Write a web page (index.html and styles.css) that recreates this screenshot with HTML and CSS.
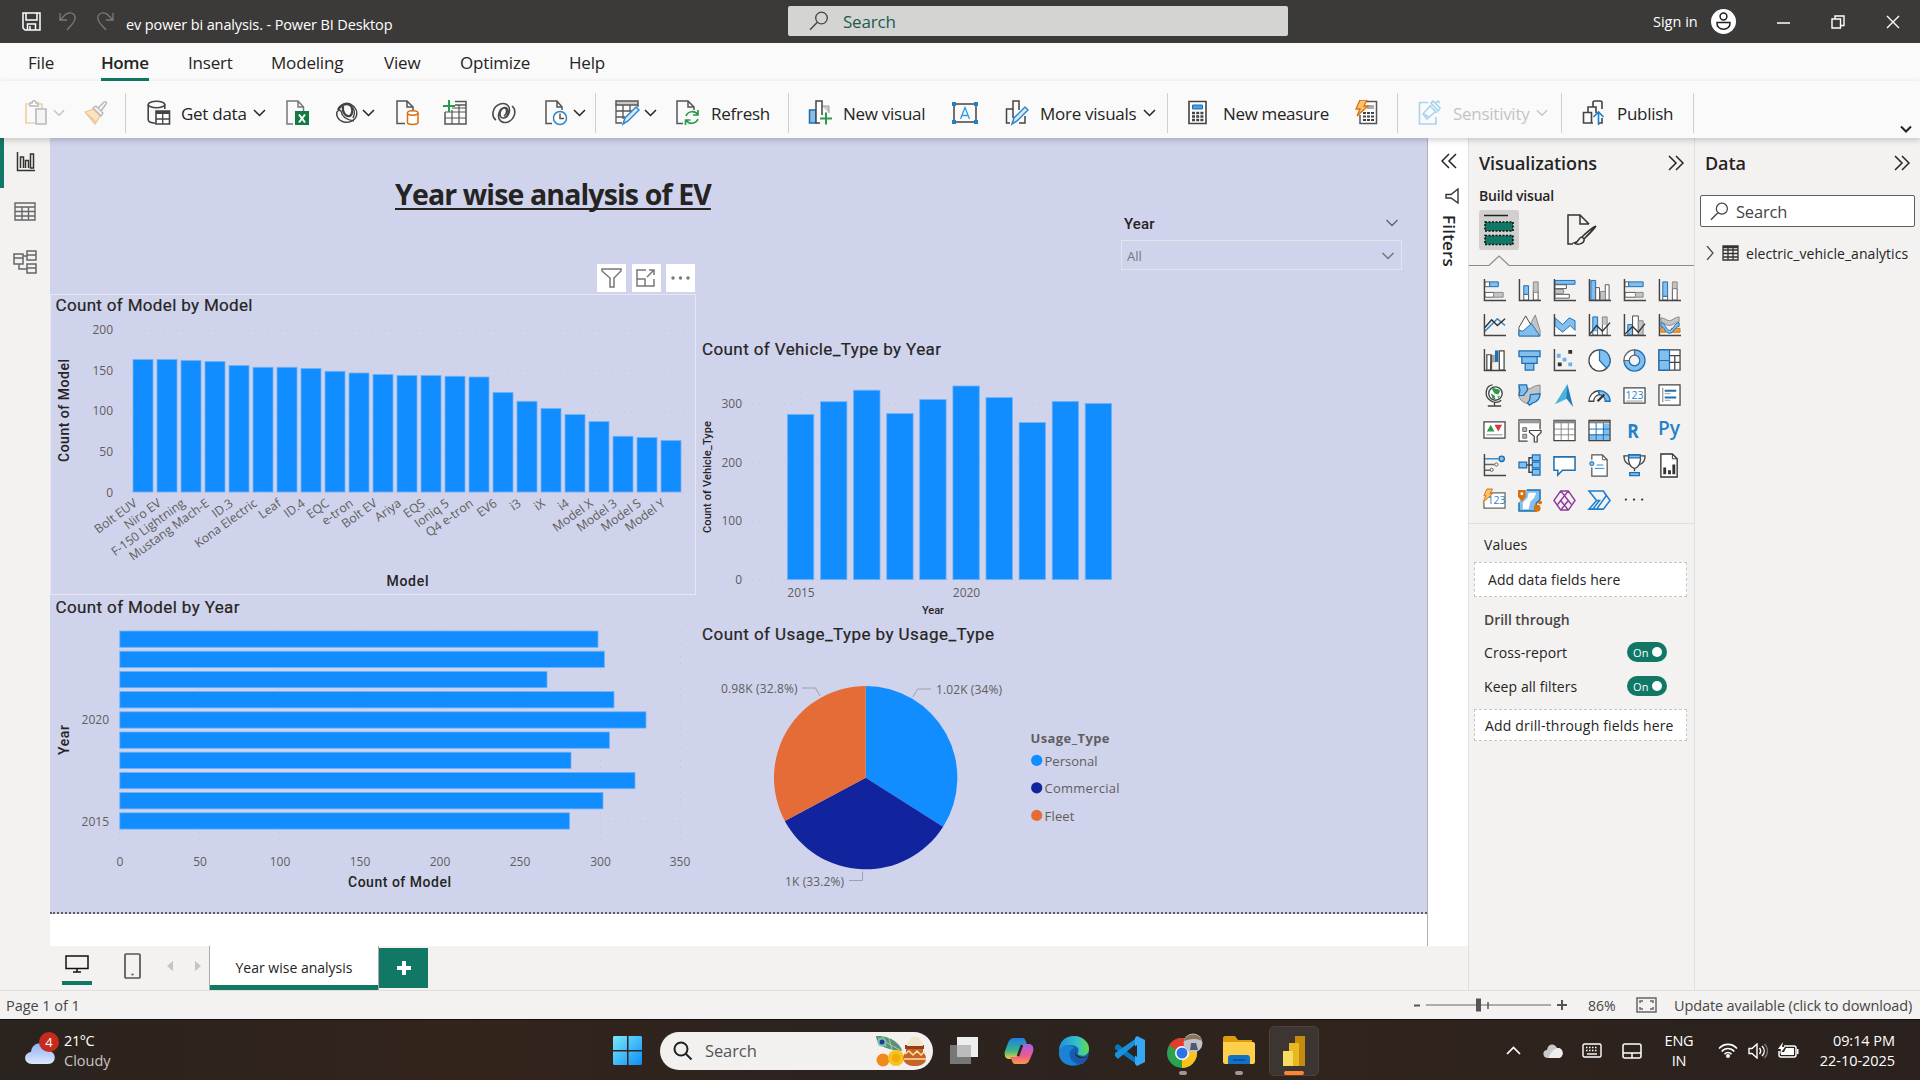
FILE: index.html
```html
<!DOCTYPE html>
<html lang="en">
<head>
<meta charset="utf-8">
<title>ev power bi analysis. - Power BI Desktop</title>
<link rel="stylesheet" href="styles.css">
</head>
<body>
<svg class="defs" width="0" height="0">
  <defs>
    <symbol id="chev" viewBox="0 0 13 8"><path d="M1 1l5.500 5.500L12 1" fill="none" stroke="currentColor" stroke-width="1.500"/></symbol>
    <symbol id="axis" viewBox="0 0 24 24"><path d="M1.500 0v22.500H24" fill="none" stroke="#444" stroke-width="1.500"/></symbol>
    <symbol id="lens" viewBox="0 0 20 20"><circle cx="12.500" cy="7" r="5.800" fill="none" stroke="currentColor" stroke-width="1.300"/><path d="M8.300 11.300L1 18.700" stroke="currentColor" stroke-width="1.400"/></symbol>
    <symbol id="dbl" viewBox="0 0 16 16"><path d="M1 1l7 7-7 7M8 1l7 7-7 7" fill="none" stroke="currentColor" stroke-width="1.500"/></symbol>
  </defs>
</svg>
<div class="app">
  <header class="titlebar">
    <svg width="20" height="20" viewBox="0 0 20 20" fill="none" stroke="#fff" stroke-width="1.500"><path d="M1 1h17v17H3l-2-2zM4 1v7h11V1M5.500 18v-6h8v6M8 14v4"/></svg>
    <svg width="18" height="20" viewBox="0 0 18 20" fill="none" stroke="#7d7b79" stroke-width="1.300"><path d="M1 1v7h7M1 8L6 3C10-1 17 1 16 7c-.400 4-5 7-8 11"/></svg>
    <svg width="18" height="20" viewBox="0 0 18 20" fill="none" stroke="#7d7b79" stroke-width="1.300"><path d="M17 1v7h-7M17 8l-5-5C8-1 1 1 2 7c.400 4 5 7 8 11"/></svg>
    <span class="wintitle">ev power bi analysis. - Power BI Desktop</span>
    <div class="topsearch"><svg width="20" height="20"><use href="#lens"/></svg><span>Search</span></div>
    <span class="signin">Sign in</span>
    <svg width="25" height="25" viewBox="0 0 25 25"><circle cx="12.500" cy="12.500" r="12.500" fill="#fff"/><circle cx="12.500" cy="7.500" r="3.400" fill="none" stroke="#222" stroke-width="1.500"/><path d="M6 13.500h13c1 9-14 9-13 0z" fill="none" stroke="#222" stroke-width="1.500"/></svg>
    <svg width="14" height="14" viewBox="0 0 14 14"><path d="M0 8h13" stroke="#fff" stroke-width="1.500"/></svg>
    <svg width="14" height="14" viewBox="0 0 14 14" fill="none" stroke="#fff" stroke-width="1.400"><path d="M1 4h8.500v9H1zM4 4V1h9v9.500H9.500"/></svg>
    <svg width="14" height="14" viewBox="0 0 14 14"><path d="M1 1l12 12M13 1L1 13" stroke="#fff" stroke-width="1.400"/></svg>
  </header>

  <nav class="menu">
    <span>File</span><span class="on">Home</span><span>Insert</span><span>Modeling</span><span>View</span><span>Optimize</span><span>Help</span>
  </nav>

  <div class="ribbon">
    <div class="cmd off"><svg width="24" height="26" viewBox="0 0 24 26" fill="none" stroke="#f1cfa3" stroke-width="1.600"><path d="M4 4H1v19h9M14 4h3v4"/><path d="M5 6V3h2c0-3 4-3 4 0h2v3z" fill="#fff" stroke="#b9b9b9"/><path d="M11 9h10v15H11z" fill="#f4f4f4" stroke="#b9b9b9"/></svg><svg class="ch" width="12" height="8"><use href="#chev"/></svg></div>
    <div class="cmd"><svg width="24" height="24" viewBox="0 0 24 24" stroke-width="1.300"><path d="M1 11l9-3 6 7-5 8z" fill="#fbe3c4" stroke="#efc592"/><path d="M3 13l9 8" fill="none" stroke="#efc592"/><path d="M9 7l3-2 7 7-2 3zM14 7l6-6c2-1 3 1 2 2l-5 7" fill="#f4f4f4" stroke="#b5b5b5"/></svg></div>
    <i class="sep"></i>
    <div class="cmd data-cmd"><svg width="24" height="26" viewBox="0 0 24 26" fill="none" stroke="#444" stroke-width="1.600"><ellipse cx="9.500" cy="4.500" rx="8.300" ry="3.300"/><path d="M1.200 4.500v15c0 2 3 3.500 7 3.700M17.800 4.500V9"/><path d="M9 11h13.500v13H9z" fill="#fff"/><path d="M9 12.500h13.500" stroke-width="3"/><path d="M9 19h13M15.700 13v11" stroke-width="1.300"/></svg><span>Get data</span><svg class="ch" width="13" height="8"><use href="#chev"/></svg></div>
    <div class="cmd"><svg width="24" height="26" viewBox="0 0 24 26"><path d="M7 24H1V1h11l5.500 6v4M12 1v6h6" fill="none" stroke="#777" stroke-width="1.500"/><path d="M9 11h14v14H9z" fill="#107c41"/><path d="M13 14.500l6 8M19 14.500l-6 8" stroke="#fff" stroke-width="2"/></svg></div>
    <div class="cmd"><svg width="22" height="22" viewBox="0 0 22 22" fill="none" stroke="#444" stroke-width="1.500"><path d="M3 7C5 2 10 0 14 2c6 3 8 8 6 13-2 4-7 6-12 5C2 19 0 13 1 10c1-2 3-2 4-1 1 6 5 9 13 10"/><path d="M2 8c2-5 8-7 12-5 3 2 3 9 0 11-4 1-8-3-7-10" stroke-width="2.200"/><path d="M14 3c4 3 6 8 3 13" /></svg><svg class="ch" width="13" height="8"><use href="#chev"/></svg></div>
    <div class="cmd"><svg width="24" height="26" viewBox="0 0 24 26" fill="none" stroke="#555" stroke-width="1.500"><path d="M9 23.500H1V1h10l6 6v3M11 1v6h6"/><g stroke="#d6700f" fill="#fff"><path d="M11.500 13v9.500c0 2.500 10.500 2.500 10.500 0V13"/><ellipse cx="16.700" cy="13" rx="5.200" ry="2.200"/></g></svg></div>
    <div class="cmd"><svg width="24" height="26" viewBox="0 0 24 26" fill="none" stroke="#555" stroke-width="1.500"><path d="M12 1.500h11V24H2V12M12 5h11" /><path d="M2 12h21M2 18h21M9 10v14M16 5v19M9 8h14" stroke-width="1.200"/><path d="M0 6h12M6 0v12" stroke="#2d9a4b" stroke-width="2"/></svg></div>
    <div class="cmd"><svg width="24" height="22" viewBox="0 0 24 22" fill="none" stroke="#4a4a4a" stroke-width="1.600"><path d="M4 18C-1 15 0 5 8 2c7-2 11 3 9 9-2 6-9 7-9 1 0-3 2-6 4-6 4 0 3 6 0 8M20 4c5 4 3 13-4 16-6 2-11-2-9-9 2-6 9-8 9-1 0 4-3 6-5 6"/></svg></div>
    <div class="cmd"><svg width="24" height="26" viewBox="0 0 24 26" fill="none" stroke="#555" stroke-width="1.500"><path d="M7 23.500H1V1h11l5 6v3M12 1v6h5"/><circle cx="15" cy="18" r="6.500" stroke="#2f86c8" fill="#fff"/><path d="M15 13.500V18.500h4"/></svg><svg class="ch" width="13" height="8"><use href="#chev"/></svg></div>
    <i class="sep"></i>
    <div class="cmd"><svg width="25" height="26" viewBox="0 0 25 26" fill="none" stroke="#555" stroke-width="1.500"><path d="M1 1h22v4H1z" fill="#c9c9c9"/><path d="M1 5v18h6M1 11h16M1 17h9M8 5v14M15 5v7M23 5v2" stroke-width="1.300"/><path d="M8 24l2-6L21 7l3 3-11 11z" fill="#d5ebfa" stroke="#2f86c8"/></svg><svg class="ch" width="13" height="8"><use href="#chev"/></svg></div>
    <div class="cmd shift"><svg width="24" height="26" viewBox="0 0 24 26" fill="none" stroke="#555" stroke-width="1.500"><path d="M7 23.500H1V1h11l6 6v3M12 1v6h6"/><g stroke="#2d9a4b" stroke-width="1.700"><path d="M10 16c2-5 9-6 12-1M22 10v5h-5M22 19c-2 5-9 6-12 1M9.500 25v-5h5"/></g></svg><span>Refresh</span></div>
    <i class="sep"></i>
    <div class="cmd shift"><svg width="24" height="26" viewBox="0 0 24 26"><path d="M14 6h7v7" fill="#ccc" stroke="#999"/><path d="M1.500 10H8v13H1.500z" fill="#83beec" stroke="#1a6fb5" stroke-width="1.500"/><path d="M12 23H8V1h6v14" fill="#fff" stroke="#444" stroke-width="1.500"/><path d="M12 18.500h12M18 12.500v12" stroke="#2d9a4b" stroke-width="2"/></svg><span>New visual</span></div>
    <div class="cmd"><svg width="26" height="22" viewBox="0 0 26 22"><path d="M2 2h22v18H2z" fill="none" stroke="#444" stroke-width="1.500"/><path d="M0 0h4v4H0zM22 0h4v4h-4zM0 18h4v4H0zM22 18h4v4h-4z" fill="#2080c5"/><path d="M8.500 17L13 5.500 17.500 17M10 13.500h6" fill="none" stroke="#2f9be0" stroke-width="1.300"/></svg></div>
    <div class="cmd shift"><svg width="24" height="26" viewBox="0 0 24 26" fill="none" stroke="#444" stroke-width="1.500"><path d="M5 23H1.500V9H8M8 18V1h6v9M20 16v7h-6"/><path d="M7 24l2-6L20 7l3 3-11 11z" fill="#d5ebfa" stroke="#2f86c8"/></svg><span>More visuals</span><svg class="ch" width="13" height="8"><use href="#chev"/></svg></div>
    <i class="sep"></i>
    <div class="cmd"><svg width="20" height="26" viewBox="0 0 20 26"><path d="M1 1.500h17v22H1z" fill="#fff" stroke="#444" stroke-width="1.600"/><path d="M4.500 5h10v4h-10z" fill="#4ba0e0" stroke="#1a6fb5"/><path d="M4 13h11.500M4 16.500h11.500M4 20h11.500" stroke="#444" stroke-width="2.400" stroke-dasharray="3 1.200"/></svg><span class="wide">New measure</span></div>
    <div class="cmd"><svg width="24" height="26" viewBox="0 0 24 26"><path d="M11 1.500h10.500v22H5V15" fill="#fff" stroke="#555" stroke-width="1.500"/><path d="M12 5h7v4h-7z" fill="#aaa"/><path d="M8 13h11M8 16.500h11M8 20h11" stroke="#444" stroke-width="2.200" stroke-dasharray="3 1"/><path d="M5 0h7L9 6h4L2 16l3-7H1z" fill="#fbc36b" stroke="#d6700f" stroke-width="1.300"/></svg></div>
    <i class="sep"></i>
    <div class="cmd off"><svg width="24" height="26" viewBox="0 0 24 26" fill="none" stroke="#a9d4ee" stroke-width="1.600"><path d="M10 2.500H1.500V24H18v-7"/><path d="M12 6l7 7M13 5l-8 9 4 5 9-8M5 14l6 3M13 3l2-2 7 7-2 3zM18 3l2-2 2 2"/></svg><span>Sensitivity</span><svg class="ch" width="12" height="8"><use href="#chev"/></svg></div>
    <i class="sep"></i>
    <div class="cmd shift"><svg width="24" height="26" viewBox="0 0 24 26" fill="none" stroke="#444" stroke-width="1.600"><path d="M11 23H1.500V12.500h8V23M6 12V7h8v6M11 7V2.500c0-1 1-1.500 2-1.500h5c1 0 2 .500 2 1.500V9M20 18v5h-3"/><path d="M16.500 25V12M11.500 17l5-5 5 5" stroke="#1a7fca"/></svg><span>Publish</span></div>
    <i class="sep"></i>
    <svg class="collapse" width="12" height="8" viewBox="0 0 12 8"><path d="M1 1.500l5 5 5-5" fill="none" stroke="#222" stroke-width="2"/></svg>
  </div>

  <main class="work">
    <aside class="rail">
      <div class="on"><svg width="20" height="20" viewBox="0 0 20 20" fill="none" stroke="#333" stroke-width="1.500"><path d="M1.500 0v18.500H19M4.500 16V5h3v11M9.500 16V8.500h3V16M14.500 16V2h3v14z"/></svg></div>
      <div><svg width="22" height="20" viewBox="0 0 22 20" fill="none" stroke="#666" stroke-width="1.400"><path d="M1 1h20v17H1zM1 5h20M1 9.500h20M1 14h20M8 5v13M14.500 5v13"/></svg></div>
      <div><svg width="24" height="24" viewBox="0 0 24 24" fill="none" stroke="#666" stroke-width="1.500"><path d="M1 4h9v10H1zM1 8h9M14 1h9v9h-9zM14 5h9M14 14h9v9h-9zM14 18h9M10 6h4M6 14v5h8"/></svg></div>
    </aside>

    <section class="center">
      <div class="stage">
        <div class="report">
          <h1 class="heading">Year wise analysis of EV</h1>

          <div class="slicer">
            <div class="slhead"><b>Year</b><svg width="14" height="8"><use href="#chev"/></svg></div>
            <div class="slbox"><span>All</span><svg width="14" height="8"><use href="#chev"/></svg></div>
          </div>

          <div class="vizbtns">
            <span><svg width="22" height="20" viewBox="0 0 22 20" fill="none" stroke="#777" stroke-width="1.500"><path d="M1 1h19v2l-7 7v9H9v-9L1 3z"/></svg></span>
            <span><svg width="20" height="18" viewBox="0 0 20 18" fill="none" stroke="#777" stroke-width="1.500"><path d="M10 1H1v16h17V10M1 10h8v7M11 8l7-7M13 1h5v5"/></svg></span>
            <span><svg width="20" height="4" viewBox="0 0 20 4" fill="#777"><circle cx="2" cy="2" r="1.700"/><circle cx="9.500" cy="2" r="1.700"/><circle cx="17" cy="2" r="1.700"/></svg></span>
          </div>

          <svg class="visual v1" viewBox="50 294 647 301">
            <rect x="50.500" y="294.500" width="645" height="300" fill="none" stroke="#e6e6ee"/>
            <text class="vt" x="55.500" y="311" textLength="197">Count of Model by Model</text>
            <path class="grid" d="M124 330.500H687M124 371H687M124 411.500H687M124 452H687M124 492.500H687"/>
            <g class="ax end"><text x="113" y="334">200</text><text x="113" y="375">150</text><text x="113" y="415">100</text><text x="113" y="456">50</text><text x="113" y="497">0</text></g>
            <g class="bars">
              <rect x="133" y="359.500" width="20" height="132.500"/><rect x="157" y="359.500" width="20" height="132.500"/><rect x="181" y="360.500" width="20" height="131.500"/><rect x="205" y="361.500" width="20" height="130.500"/><rect x="229" y="365.500" width="20" height="126.500"/><rect x="253" y="367.300" width="20" height="124.700"/><rect x="277" y="367.300" width="20" height="124.700"/><rect x="301" y="368.500" width="20" height="123.500"/><rect x="325" y="371.300" width="20" height="120.700"/><rect x="349" y="373" width="20" height="119"/><rect x="373" y="374.500" width="20" height="117.500"/><rect x="397" y="375.500" width="20" height="116.500"/><rect x="421" y="375.500" width="20" height="116.500"/><rect x="445" y="376.300" width="20" height="115.700"/><rect x="469" y="377" width="20" height="115"/><rect x="493" y="392.500" width="20" height="99.500"/><rect x="517" y="401.300" width="20" height="90.700"/><rect x="541" y="408.500" width="20" height="83.500"/><rect x="565" y="414.500" width="20" height="77.500"/><rect x="589" y="421.600" width="20" height="70.400"/><rect x="613" y="436.300" width="20" height="55.700"/><rect x="637" y="437.600" width="20" height="54.400"/><rect x="661" y="440.500" width="20" height="51.500"/>
            </g>
            <g class="ax end tilt">
              <text transform="translate(138 505) rotate(-36)">Bolt EUV</text><text transform="translate(162 505) rotate(-36)">Niro EV</text><text transform="translate(186 505) rotate(-36)">F-150 Lightning</text><text transform="translate(210 505) rotate(-36)">Mustang Mach-E</text><text transform="translate(234 505) rotate(-36)">ID.3</text><text transform="translate(258 505) rotate(-36)">Kona Electric</text><text transform="translate(282 505) rotate(-36)">Leaf</text><text transform="translate(306 505) rotate(-36)">ID.4</text><text transform="translate(330 505) rotate(-36)">EQC</text><text transform="translate(354 505) rotate(-36)">e-tron</text><text transform="translate(378 505) rotate(-36)">Bolt EV</text><text transform="translate(402 505) rotate(-36)">Ariya</text><text transform="translate(426 505) rotate(-36)">EQS</text><text transform="translate(450 505) rotate(-36)">Ioniq 5</text><text transform="translate(474 505) rotate(-36)">Q4 e-tron</text><text transform="translate(498 505) rotate(-36)">EV6</text><text transform="translate(522 505) rotate(-36)">i3</text><text transform="translate(546 505) rotate(-36)">iX</text><text transform="translate(570 505) rotate(-36)">i4</text><text transform="translate(594 505) rotate(-36)">Model X</text><text transform="translate(618 505) rotate(-36)">Model 3</text><text transform="translate(642 505) rotate(-36)">Model S</text><text transform="translate(666 505) rotate(-36)">Model Y</text>
            </g>
            <text class="at" transform="translate(69 462) rotate(-90)" textLength="103">Count of Model</text>
            <text class="at" x="386.500" y="586" textLength="42">Model</text>
          </svg>

          <svg class="visual v2" viewBox="50 596 647 300">
            <text class="vt" x="55.500" y="613" textLength="184">Count of Model by Year</text>
            <path class="grid" d="M119.500 630V850M199.500 630V850M279.500 630V850M360 630V850M440 630V850M520 630V850M600.500 630V850M680.500 630V850M120 720H680M120 821.500H680"/>
            <g class="bars">
              <rect x="119.800" y="631" width="478.200" height="16.300"/><rect x="119.800" y="651.200" width="484.700" height="16.300"/><rect x="119.800" y="671.400" width="427.200" height="16.300"/><rect x="119.800" y="691.600" width="494.200" height="16.300"/><rect x="119.800" y="711.800" width="526.200" height="16.300"/><rect x="119.800" y="732" width="489.600" height="16.300"/><rect x="119.800" y="752.200" width="451.200" height="16.300"/><rect x="119.800" y="772.400" width="515.200" height="16.300"/><rect x="119.800" y="792.600" width="483.200" height="16.300"/><rect x="119.800" y="812.800" width="449.800" height="16.300"/>
            </g>
            <g class="ax end"><text x="109" y="724">2020</text><text x="109" y="826">2015</text></g>
            <g class="ax mid"><text x="120" y="866">0</text><text x="200" y="866">50</text><text x="280" y="866">100</text><text x="360" y="866">150</text><text x="440" y="866">200</text><text x="520" y="866">250</text><text x="600.500" y="866">300</text><text x="680" y="866">350</text></g>
            <text class="at" transform="translate(69 755) rotate(-90)" textLength="30">Year</text>
            <text class="at" x="348" y="887" textLength="103">Count of Model</text>
          </svg>

          <svg class="visual v3" viewBox="697 330 450 290">
            <text class="vt" x="702" y="355" textLength="239">Count of Vehicle_Type by Year</text>
            <path class="grid" d="M752 403.500H1112M752 462.500H1112M752 521.500H1112M752 580H1112M801 373V415M966.500 373V388"/>
            <g class="bars">
              <rect x="787.400" y="414.400" width="26.400" height="165.200"/><rect x="820.500" y="401.700" width="26.400" height="177.900"/><rect x="853.600" y="390.200" width="26.400" height="189.400"/><rect x="886.700" y="413.600" width="26.400" height="166"/><rect x="919.700" y="399.600" width="26.400" height="180"/><rect x="952.900" y="386" width="26.400" height="193.600"/><rect x="986" y="397.600" width="26.400" height="182"/><rect x="1019.100" y="422.600" width="26.400" height="157"/><rect x="1052.200" y="401.400" width="26.400" height="178.200"/><rect x="1085.200" y="403.500" width="26.400" height="176.100"/>
            </g>
            <g class="ax end"><text x="742" y="408">300</text><text x="742" y="467">200</text><text x="742" y="525">100</text><text x="742" y="584">0</text></g>
            <g class="ax mid"><text x="801" y="597">2015</text><text x="966.500" y="597">2020</text></g>
            <text class="at sm" transform="translate(711 533) rotate(-90)" textLength="112">Count of Vehicle_Type</text>
            <text class="at sm" x="922" y="614" textLength="22">Year</text>
          </svg>

          <svg class="visual v4" viewBox="697 620 450 276">
            <text class="vt" x="702" y="640" textLength="292">Count of Usage_Type by Usage_Type</text>
            <path d="M865.700 777.700V686A91.700 91.700 0 0 1 943.100 826.800Z" fill="#118dff"/>
            <path d="M865.700 777.700L943.100 826.800A91.700 91.700 0 0 1 784.800 820.900Z" fill="#12239e"/>
            <path d="M865.700 777.700L784.800 820.900A91.700 91.700 0 0 1 865.700 686Z" fill="#e66c37"/>
            <path d="M802 688h13.500l4.500 8M931 689h-13.500l-4.500 8M849 880.500h13.500v-9" fill="none" stroke="#a0a0ab"/>
            <g class="ax"><text x="721" y="693" textLength="76.500">0.98K (32.8%)</text><text x="936" y="694" textLength="66">1.02K (34%)</text><text x="785" y="886" textLength="59">1K (33.2%)</text></g>
            <g class="lg"><text class="lgt" x="1030.500" y="743" textLength="79">Usage_Type</text>
            <circle cx="1036.700" cy="760.300" r="5.600" fill="#118dff"/><circle cx="1036.700" cy="787.800" r="5.600" fill="#12239e"/><circle cx="1036.700" cy="815.400" r="5.600" fill="#e66c37"/>
            <text x="1044.500" y="766" textLength="53">Personal</text><text x="1044.500" y="793" textLength="75">Commercial</text><text x="1044.500" y="821" textLength="30">Fleet</text></g>
          </svg>
        </div>
      </div>
      <div class="filters">
        <svg class="flip" width="16" height="16"><use href="#dbl"/></svg>
        <svg width="14" height="16" viewBox="0 0 14 16" fill="none" stroke="#333" stroke-width="1.400"><path d="M13 1v14l-7-5H1V6.500h5z"/></svg>
        <b>Filters</b>
      </div>
      <div class="tabs">
        <div class="dev on"><svg width="24" height="18" viewBox="0 0 24 18" fill="none" stroke="#111" stroke-width="1.500"><path d="M1 1h22v12.500H1zM12 13.500V17M8 17h8"/></svg></div>
        <svg width="17" height="26" viewBox="0 0 17 26" fill="none" stroke="#555" stroke-width="1.700"><rect x="1" y="1" width="15" height="24" rx="1"/><path d="M7.500 21.500h2"/></svg>
        <svg width="6" height="10"><path d="M6 0L0 5l6 5z" fill="#c4c4c4"/></svg>
        <svg width="6" height="10"><path d="M0 0l6 5-6 5z" fill="#c4c4c4"/></svg>
        <div class="tab">Year wise analysis</div>
        <div class="plus"><svg width="14" height="14"><path d="M7 0v14M0 7h14" stroke="#fff" stroke-width="4"/></svg></div>
      </div>
    </section>

    <aside class="pane viz">
      <div class="phead"><h2>Visualizations</h2><svg width="16" height="16"><use href="#dbl"/></svg></div>
      <div class="bv">Build visual</div>
      <div class="modes">
        <span class="on"><svg width="30" height="32" viewBox="0 0 30 32"><path d="M0 1.500h24" stroke="#222" stroke-width="1.500"/><g fill="#117865" stroke="#111" stroke-width="1.600" stroke-dasharray="2 1.500"><path d="M1 8h28v9H1zM1 21.500h28v9H1z"/></g></svg></span>
        <span><svg width="30" height="32" viewBox="0 0 30 32" fill="none" stroke="#333" stroke-width="1.500"><path d="M6 30H1V1h12l9 9M13 1v9h9M29 12L17 25M29 12c-4 2-10 7-14 11l2 2c4-4 10-9 12-13M15 23c-4 0-2 5-8 6 4 3 11 0 10-4"/></svg></span>
      </div>
      <svg class="notch" width="225" height="12" viewBox="0 0 225 12" fill="none" stroke="#8a8a8a" stroke-width="1.200"><path d="M0 10.500h20l10-9.500 10 9.500h185"/></svg>
      <div class="icons">
        <svg viewBox="0 0 24 24"><path d="M2 3h5v5H2zM2 14h9v5H2z" fill="#fff" stroke="#555"/><path d="M7 3h9v5H7z" fill="#83beec" stroke="#1a6fb5"/><path d="M11 14h10v5H11z" fill="#c4c4c4" stroke="#888"/><use href="#axis"/></svg>
        <svg viewBox="0 0 24 24"><path d="M6 16h5v6H6zM16 12h5v10h-5z" fill="#fff" stroke="#555"/><path d="M6 7h5v9H6z" fill="#83beec" stroke="#1a6fb5"/><path d="M16 3h5v11h-5z" fill="#c4c4c4" stroke="#888"/><use href="#axis"/></svg>
        <svg viewBox="0 0 24 24"><path d="M2 1.500h21v4H2z" fill="#83beec" stroke="#1a6fb5"/><path d="M2 6h12v4H2zM2 16h15v4H2z" fill="#fff" stroke="#555"/><path d="M2 11h9v4H2z" fill="#c4c4c4" stroke="#888"/><use href="#axis"/></svg>
        <svg viewBox="0 0 24 24"><path d="M3 1.500h5V22H3z" fill="#83beec" stroke="#1a6fb5"/><path d="M8 9h4v13H8zM18 6h4v16h-4z" fill="#fff" stroke="#555"/><path d="M13 13h5v9h-5z" fill="#c4c4c4" stroke="#888"/><use href="#axis"/></svg>
        <svg viewBox="0 0 24 24"><path d="M2 3h4v5H2zM2 14h11v5H2z" fill="#fff" stroke="#555"/><path d="M6 3h15v5H6z" fill="#83beec" stroke="#1a6fb5"/><path d="M13 14h8v5h-8z" fill="#c4c4c4" stroke="#888"/><use href="#axis"/></svg>
        <svg viewBox="0 0 24 24"><path d="M5 18h5v4H5zM15 10h5v12h-5z" fill="#fff" stroke="#555"/><path d="M5 3h5v15H5z" fill="#83beec" stroke="#1a6fb5"/><path d="M15 3h5v7h-5z" fill="#c4c4c4" stroke="#888"/><use href="#axis"/></svg>

        <svg viewBox="0 0 24 24" fill="none" stroke-width="1.600"><path d="M2 18L15 5l8 7" stroke="#2f86c8"/><path d="M2 14l7-8 6 6 8-7" stroke="#333"/><use href="#axis"/></svg>
        <svg viewBox="0 0 24 24"><path d="M12 12l6-11 5 16v6H1z" fill="#c4c4c4" stroke="#888"/><path d="M1 22V14L8 2l8 14z" fill="#fff" stroke="#444"/><path d="M1 23v-6l4 1 9-8 9 13z" fill="#83beec" stroke="#1a6fb5"/></svg>
        <svg viewBox="0 0 24 24"><path d="M2 22V12l8 7 7-6 6 5v4" fill="#fff"/><path d="M2 4l8 7 7-7 6 3v10l-5-5-8 7-8-7z" fill="#83beec" stroke="#1a6fb5"/><use href="#axis"/></svg>
        <svg viewBox="0 0 24 24"><path d="M5 3h5v15H5z" fill="#83beec" stroke="#1a6fb5"/><path d="M15 3h5v8h-5z" fill="#c4c4c4" stroke="#888"/><path d="M5 18v4h5v-4M15 11v11h5V11" fill="#fff" stroke="#555"/><path d="M2 21l7-9 6 6 8-9" fill="none" stroke="#333" stroke-width="1.400"/><use href="#axis"/></svg>
        <svg viewBox="0 0 24 24"><path d="M5 11h5v11H5z" fill="#83beec" stroke="#1a6fb5"/><path d="M10 2h6v20h-6z" fill="#fff" stroke="#444"/><path d="M16 7h5v15h-5z" fill="#c4c4c4" stroke="#888"/><path d="M2 21l8-8 6 6 7-9" fill="none" stroke="#333" stroke-width="1.400"/><use href="#axis"/></svg>
        <svg viewBox="0 0 24 24"><path d="M3 14h5v5H3zM14 15h9v4h-9z" fill="#f19a3e" stroke="#d6700f"/><path d="M3 4c4 0 6 3 9 3s6-4 10-4v5c-4 0-6 4-10 4S7 9 3 9z" fill="#c4c4c4" stroke="#888"/><path d="M3 9c5 0 5 8 9 8s5-8 10-8v4c-5 0-5 7-10 7s-5-7-9-7z" fill="#83beec" stroke="#1a6fb5"/><use href="#axis"/></svg>

        <svg viewBox="0 0 24 24"><path d="M4 6h4v16H4zM17 2h5v20h-5z" fill="#fff" stroke="#444" stroke-width="1.300"/><path d="M8 6h5v8H8z" fill="#aaa"/><path d="M12.500 1.500h3.500v12h-3.500z" fill="#1a6fb5"/><path d="M9 6v16" stroke="#444"/><use href="#axis"/></svg>
        <svg viewBox="0 0 24 24" fill="#83beec" stroke="#1a6fb5" stroke-width="1.300"><path d="M1 2h22v6H1zM4 8h16v7H4zM7.500 15h9v7h-9z"/></svg>
        <svg viewBox="0 0 24 24"><path d="M16 1h4v4h-4zM5 14h4v4H5z" fill="#333"/><path d="M4 5h4v4H4zM10 9h4v4h-4zM16 14h4v4h-4z" fill="#71b1e6"/><use href="#axis"/></svg>
        <svg viewBox="0 0 24 24" stroke-width="1.300"><circle cx="12" cy="12" r="11" fill="#fff" stroke="#444"/><path d="M12 1a11 11 0 0 1 7.500 19L12 12z" fill="#83beec" stroke="#1a6fb5"/></svg>
        <svg viewBox="0 0 24 24" stroke-width="1.300"><path d="M12 1a11 11 0 1 1-11 11h5.500A5.500 5.500 0 1 0 12 6.500z" fill="#83beec" stroke="#1a6fb5"/><path d="M12 1A11 11 0 0 0 1 12h5.500A5.500 5.500 0 0 1 12 6.500z" fill="#fff" stroke="#666"/></svg>
        <svg viewBox="0 0 24 24" stroke-width="1.300"><path d="M1 1h22v21H1z" fill="#fff" stroke="#444"/><path d="M1 1h11v21H1zM1 12h11" fill="#83beec" stroke="#1a6fb5"/><path d="M12 7h11M12 14h11M17.500 7v15" stroke="#444"/></svg>

        <svg viewBox="0 0 24 24" fill="none" stroke="#444" stroke-width="1.400"><circle cx="13" cy="10" r="7" fill="#fff"/><path d="M9 5c3-2 4 1 6 0l3 2-2 4-4-1zM8 10l4 2 1 4-3-1zM15 13l3-1-2 3z" fill="#2d9a4b" stroke="none"/><path d="M10 1C2 2 2 12 6 16s10 4 13 1M12 19v4M5 23h14"/></svg>
        <svg viewBox="0 0 24 24"><path d="M1 2l6 1 5 2 6-3 5-1v9c0 7-6 9-11 11-5-1-11-4-11-9z" fill="#c4c4c4" stroke="#888"/><path d="M1 1h8l1 5c-1 3-3 3-4 6H1l1-5zM13 11l10-1c0 7-4 9-8 10l-3 2-2-2 2-3z" fill="#83beec" stroke="#1a6fb5" stroke-width="1.300"/></svg>
        <svg viewBox="0 0 24 24"><path d="M15 0L2 21l13-6z" fill="#49b3dc"/><path d="M15 0l6 24-7-9z" fill="#2279b8"/></svg>
        <svg viewBox="0 0 24 24" stroke-width="1.400"><path d="M1 18A11 11 0 0 1 11 7l1 4a7 7 0 0 0-6 7z" fill="#fff" stroke="#444"/><path d="M11 7a11 11 0 0 1 12 11h-5a7 7 0 0 0-6-7z" fill="#83beec" stroke="#1a6fb5"/><path d="M10 18l7-7" stroke="#333" stroke-width="2.400"/></svg>
        <svg viewBox="0 0 24 24"><path d="M1 4h22v16H1z" fill="#fff" stroke="#444" stroke-width="1.300"/><text x="12" y="15.500" font-size="11" text-anchor="middle" fill="#2f86c8">123</text><path d="M3.500 17.800h17" stroke="#999"/></svg>
        <svg viewBox="0 0 24 24"><path d="M1 1h22v21H1z" fill="#fff" stroke="#444" stroke-width="1.300"/><path d="M5 4v15" stroke="#777"/><path d="M7 7h12M7 14h12" stroke="#1a6fb5" stroke-width="2"/><path d="M7 10h6M7 17h6" stroke="#999"/></svg>

        <svg viewBox="0 0 24 24"><path d="M1 3h22v17H1z" fill="#fff" stroke="#444" stroke-width="1.300"/><path d="M4 13l4-7 4 7z" fill="#2d9a4b"/><path d="M12 6h8l-4 7z" fill="#d9363e"/><path d="M3.500 16.500h17" stroke="#888"/></svg>
        <svg viewBox="0 0 24 24"><path d="M10 23H1V1h22v10" fill="#fff" stroke="#444" stroke-width="1.300"/><path d="M1 3h22" stroke="#999" stroke-width="3"/><path d="M5 9h4v4H5zM5 16h4v4H5z" fill="#bbb" stroke="#666"/><path d="M12 12h12v2l-4 4v6h-3v-6l-5-4z" fill="#fff" stroke="#444" stroke-width="1.300"/></svg>
        <svg viewBox="0 0 24 24"><path d="M1 1.500h22v21H1z" fill="#fff" stroke="#444" stroke-width="1.300"/><path d="M1 3h22" stroke="#888" stroke-width="3"/><path d="M1 10.500h22M1 16.500h22M8.500 4v18M16 4v18" stroke="#888"/></svg>
        <svg viewBox="0 0 24 24"><path d="M1 1.500h22v21H1z" fill="#fff"/><path d="M16 5h7v17H1v-6h15z" fill="#83beec"/><path d="M1 3h22" stroke="#888" stroke-width="3"/><path d="M1 10.500h22M1 16.500h22M8.500 4v18M16 4v18" stroke="#1a6fb5"/><path d="M1 1.500h22v21H1z" fill="none" stroke="#444" stroke-width="1.300"/></svg>
        <svg viewBox="0 0 24 24"><text x="4.500" y="19.500" font-size="21" font-weight="700" fill="#2383c6" textLength="12" lengthAdjust="spacingAndGlyphs">R</text></svg>
        <svg viewBox="0 0 24 24"><text x="0" y="17" font-size="20" font-weight="600" fill="#2383c6" textLength="23" lengthAdjust="spacingAndGlyphs">Py</text></svg>

        <svg viewBox="0 0 24 24" fill="none"><path d="M2 5h14" stroke="#2f86c8" stroke-width="1.500"/><circle cx="19.500" cy="5" r="2.800" fill="#83beec" stroke="#1a6fb5" stroke-width="1.400"/><path d="M2 11h10M2 17h6" stroke="#666" stroke-width="1.400"/><circle cx="14" cy="11" r="1.700" stroke="#666"/><circle cx="9" cy="16.500" r="1.700" stroke="#666"/><use href="#axis"/></svg>
        <svg viewBox="0 0 24 24" stroke-width="1.300"><path d="M9 11.500h6M11.500 11.500V4H15M11.500 11.500V19H15" fill="none" stroke="#444" stroke-width="1.600"/><path d="M1 8.500h8v6H1zM15 1h8v6h-8zM15 8.500h8v6h-8zM15 16h8v6h-8z" fill="#83beec" stroke="#1a6fb5"/></svg>
        <svg viewBox="0 0 24 24"><path d="M1 3h22v14H10l-5 5v-5H1z" fill="#fff" stroke="#2270b0" stroke-width="1.600"/></svg>
        <svg viewBox="0 0 24 24"><path d="M4 6V1h11l5 5v17H4V14" fill="#fff" stroke="#555" stroke-width="1.300"/><path d="M15 1v5h5" fill="none" stroke="#555"/><circle cx="4" cy="10" r="2.200" fill="#83beec" stroke="#1a6fb5"/><path d="M9 11.500h7M7 15h10" stroke="#2f86c8"/></svg>
        <svg viewBox="0 0 24 24" stroke="#444" stroke-width="1.400"><path d="M6 2H1c0 6 2 8 6 9M18 2h5c0 6-2 8-6 9" fill="none"/><path d="M6 1h12c1 7-1 13-6 14C7 14 5 8 6 1z" fill="#fff"/><path d="M12 15v3" /><path d="M6 1h12v3H6zM7 19.500h10v3H7z" fill="#83beec" stroke="#1a6fb5"/></svg>
        <svg viewBox="0 0 24 24"><path d="M3 0h12l5 5v19H3z" fill="#fff" stroke="#333" stroke-width="1.400"/><path d="M15 0v5h5" fill="none" stroke="#333"/><path d="M7 14v7M12 17v4M16.500 11v10" stroke="#333" stroke-width="3"/></svg>

        <svg viewBox="0 0 24 24"><path d="M8 4h15v16H1v-6" fill="#fff" stroke="#666" stroke-width="1.300"/><text x="14" y="16" font-size="11" text-anchor="middle" fill="#2f86c8">123</text><path d="M4 0h6L7 5h3L0 14l3-7H1z" fill="#fbc36b" stroke="#d6700f"/></svg>
        <svg viewBox="0 0 24 24"><path d="M9 1h14v10l-4 4v8H1v-9" fill="#83beec" stroke="#1a6fb5" stroke-width="1.500"/><path d="M11 4h8l-2 5-4 4-2 8H5v-7l5-5z" fill="#fff"/><path d="M0 1h8v7l-4 5-4-5z" fill="#d6700f"/><circle cx="4" cy="5" r="1.500" fill="#fff"/><circle cx="20" cy="20" r="3.500" fill="#e07000"/><circle cx="23" cy="14" r="2" fill="#e07000"/></svg>
        <svg viewBox="0 0 24 24" fill="none" stroke="#8c3a9c" stroke-width="1.500"><path d="M8 2h8l7 10-7 10H8L1 12zM8 2l8 10-4 5-4-5 8-10M8 22l-4-6M12 17l4 5M12 17l-4 5M8 12l-3 4M16 12l3 4"/></svg>
        <svg viewBox="0 0 24 24" fill="none" stroke="#1a7fd4" stroke-width="1.600"><path d="M1 2h15l7 10-7 9H1l8-9zM9 12h3l-7 9M16 2l3 5-10 14"/></svg>
        <svg viewBox="0 0 24 24" fill="#333"><circle cx="3" cy="11" r="1.200"/><circle cx="11.500" cy="11" r="1.200"/><circle cx="20" cy="11" r="1.200"/></svg>
      </div>
      <div class="wells">
        <div class="lbl">Values</div>
        <div class="well a">Add data fields here</div>
        <div class="lbl semi">Drill through</div>
        <div class="row"><span>Cross-report</span><span class="toggle">On<i></i></span></div>
        <div class="row"><span>Keep all filters</span><span class="toggle">On<i></i></span></div>
        <div class="well b">Add drill-through fields here</div>
      </div>
    </aside>

    <aside class="pane data">
      <div class="phead"><h2>Data</h2><svg width="16" height="16"><use href="#dbl"/></svg></div>
      <div class="dsearch"><svg width="19" height="19"><use href="#lens"/></svg><span>Search</span></div>
      <div class="table"><svg width="8" height="14" viewBox="0 0 8 14"><path d="M1 0l6 7-6 7" fill="none" stroke="#444" stroke-width="1.200"/></svg><svg width="17" height="16" viewBox="0 0 17 16" fill="none" stroke="#333" stroke-width="1.300"><path d="M1 1h15v14H1zM1 5h15M1 8.500h15M1 12h15M6 3v12M11 3v12M1 2.500h15"/></svg><span>electric_vehicle_analytics</span></div>
    </aside>
  </main>

  <footer class="status">
    <span>Page 1 of 1</span>
    <svg width="160" height="14" viewBox="0 0 160 14"><path d="M0 7.500h6" stroke="#555" stroke-width="2"/><path d="M12 7h125" stroke="#666"/><path d="M62 .500h5v13h-5z" fill="#555"/><path d="M74 4v7" stroke="#555" stroke-width="1.500"/><path d="M143 7h10M148 2v10" stroke="#555" stroke-width="2"/></svg>
    <span>86%</span>
    <svg width="21" height="16" viewBox="0 0 21 16" fill="none" stroke="#666" stroke-width="1.500"><path d="M1 1h19v14H1z"/><path d="M4 6V4h3M14 4h3v2M17 10v2h-3M7 12H4v-2"/></svg>
    <span class="upd">Update available (click to download)</span>
  </footer>

  <div class="taskbar">
    <div class="weather"><svg width="38" height="40" viewBox="0 0 38 40"><defs><linearGradient id="cl" x1="0" y1="0" x2="0" y2="1"><stop offset="0" stop-color="#8fb0f3"/><stop offset="1" stop-color="#dde9fc"/></linearGradient></defs><path d="M8 33c-9 0-9-11-1-12 1-11 15-12 17-1 9 0 9 13 0 13z" fill="url(#cl)"/><circle cx="25" cy="11" r="10" fill="#c42b1c"/><text x="25" y="16" text-anchor="middle" font-size="13" fill="#fff">4</text></svg><div><b>21°C</b><span>Cloudy</span></div></div>
    <svg width="30" height="30" viewBox="0 0 30 30"><defs><linearGradient id="wn" x1="0" y1="0" x2="1" y2="1"><stop offset="0" stop-color="#7ce8fd"/><stop offset="1" stop-color="#0a8ff5"/></linearGradient></defs><path d="M1 0h13v14H0V1zM15.500 0H28l1 1v13H15.500zM0 15.500h14V29H1l-1-1zM15.500 15.500H29V28l-1 1H15.500z" fill="url(#wn)"/></svg>
    <div class="tsearch"><svg width="20" height="20" viewBox="0 0 20 20" fill="none" stroke="#222" stroke-width="2"><circle cx="8" cy="8" r="6.500"/><path d="M12.500 12.500l6 6"/></svg><span>Search</span>
      <svg width="54" height="32" viewBox="0 0 54 32"><path d="M2 1c14-1 25 8 26 15C17 15 3 13 2 1z" fill="#5b9079"/><path d="M4 3l22 12M9 2l3 10M15 3l3 12" stroke="#a9cba4"/><circle cx="8" cy="7" r="4.500" fill="#79c6a2"/><circle cx="8" cy="7" r="2.500" fill="#1b3c9a"/><circle cx="9" cy="25" r="6.500" fill="#f08a1c"/><circle cx="22" cy="23" r="8" fill="#f8c41c"/><circle cx="22" cy="23" r="4" fill="#f5a90f"/><path d="M32 13h17v4c6 6 3 14-8 14s-15-8-9-14z" fill="#c5632a"/><path d="M31 10h19v4H31z" fill="#8f3f1b"/><path d="M33 11c0-4 2-5 3-6 2-5 8-5 10 0 2 1 3 3 3 6z" fill="#f1e6cd"/><path d="M31 19l4-3 4 4 4-4 4 4 4-4M30 24h22" stroke="#ffe29a" fill="none" stroke-width="1.500"/></svg></div>
    <svg width="30" height="30" viewBox="0 0 30 30"><path d="M1 9h21v19H1z" fill="#777"/><path d="M8 1h21v20H8z" fill="#eee"/><path d="M8 9h14v12H8z" fill="#bcbcbc"/></svg>
    <svg width="30" height="30" viewBox="0 0 30 30"><defs><linearGradient id="cp1" x1="0" y1="0" x2="0" y2="1"><stop offset="0" stop-color="#1d7fe8"/><stop offset=".6" stop-color="#37b58a"/><stop offset="1" stop-color="#f3cf2e"/></linearGradient><linearGradient id="cp2" x1="0" y1="0" x2="0" y2="1"><stop offset="0" stop-color="#a262e8"/><stop offset=".6" stop-color="#ee5c8c"/><stop offset="1" stop-color="#fa9a4c"/></linearGradient></defs><path d="M10 2h9c3 0 3 6 5 8h-7l-5 13H5c-4 0-5-4-4-8L4 7c1-3 3-5 6-5z" fill="url(#cp1)"/><path d="M20 28h-9c-3 0-3-5-5-7h7l5-13h7c4 0 5 4 4 8l-3 7c-1 3-3 5-6 5z" fill="url(#cp2)"/><path d="M14 20l4-11" stroke="#2b2320" stroke-width="2.500"/></svg>
    <svg width="32" height="32" viewBox="0 0 32 32"><defs><linearGradient id="ed" x1="0" y1="0" x2="1" y2="0"><stop offset="0" stop-color="#1d90dc"/><stop offset=".6" stop-color="#35c1c8"/><stop offset="1" stop-color="#62d94a"/></linearGradient></defs><circle cx="16" cy="16" r="15" fill="#1160b5"/><path d="M1 16C1 6 8 1 16 1c9 0 16 7 15 14-1 5-6 7-10 5-3-2 1-3-1-7C16 8 4 9 1 16z" fill="url(#ed)"/><path d="M1 17c2-8 12-9 15-4-7 2-6 14 4 16C8 34 0 25 1 17z" fill="#1b82d6"/><path d="M17 15c-4 5 3 11 11 7l2 1-5 6c-9-1-12-10-8-14z" fill="#2055a4"/><path d="M18 14c-3 5 3 9 9 8l3-1c-3 3-13 3-13-3z" fill="#2b2320"/></svg>
    <svg width="32" height="32" viewBox="0 0 32 32"><path d="M1 11l3-2 20 16v5L1 14z" fill="#0b76c0"/><path d="M1 21l3 3L24 7V2L1 18z" fill="#1a8fda"/><path d="M23 1l8 4v22l-8 4-2-2V3z" fill="#36a7f2"/><path d="M23 10v12l-8-6z" fill="#2b2320"/></svg>
    <div class="run"><svg width="38" height="36" viewBox="0 0 38 36"><circle cx="15" cy="20" r="15" fill="#2ba24c"/><path d="M15 20L2 12.500A15 15 0 0 1 28 12.500z" fill="#e33b2e"/><path d="M15 20l13-7.500A15 15 0 0 1 15 35z" fill="#fbc31b"/><circle cx="15" cy="20" r="7" fill="#fff"/><circle cx="15" cy="20" r="5.500" fill="#2a72e8"/><circle cx="26" cy="10" r="9.500" fill="#bfc3cc"/><path d="M17 8c2-8 15-9 18 0-6-3-12-2-18 0z" fill="#8d7454"/><path d="M24 10h5l2 7h-8z" fill="#525a68"/></svg><i></i></div>
    <div class="run"><svg width="32" height="30" viewBox="0 0 32 30"><path d="M0 2c0-1 1-2 2-2h10l3 4h14v8H0z" fill="#dc9d0d"/><path d="M0 6h30c1 0 2 1 2 2v18c0 1-1 2-2 2H2c-1 0-2-1-2-2z" fill="#fdcf4a"/><path d="M5 22c0-2 1-3 3-3h16c2 0 3 1 3 3v6H5z" fill="#1270c6"/><path d="M10 24h12" stroke="#0b4b8c" stroke-width="1.500"/></svg><i></i></div>
    <div class="run active"><svg width="24" height="30" viewBox="0 0 24 30"><path d="M13 0h10v30H13z" fill="#c8890f"/><path d="M7 7h10v23H7z" fill="#e8b91f"/><path d="M1 15h10v15H1z" fill="#f8dc62"/></svg><i></i></div>
    <svg width="15" height="9" viewBox="0 0 15 9"><path d="M1 8l6.500-6.500L14 8" fill="none" stroke="#fff" stroke-width="1.700"/></svg>
    <svg width="20" height="14" viewBox="0 0 20 14"><path d="M5 14c-6 0-6-8-1-8C5-1 12-1 14 4c7-1 8 10 1 10z" fill="#c9c9c9"/><path d="M6 14c1-5 4-9 9-10 6 0 6 10 0 10z" fill="#eee"/></svg>
    <svg width="20" height="15" viewBox="0 0 20 15" fill="none" stroke="#fff" stroke-width="1.400"><rect x="1" y="1" width="18" height="13" rx="1.500"/><path d="M4 4.500h12M4 7.500h12" stroke-dasharray="1.500 1.500" stroke-width="1.600"/><path d="M5 11h10"/></svg>
    <svg width="20" height="16" viewBox="0 0 20 16" fill="none" stroke="#fff" stroke-width="1.500"><rect x="1" y="1" width="18" height="14" rx="2"/><path d="M1 10h18M10 10v5"/></svg>
    <div class="lang">ENG<br>IN</div>
    <svg width="20" height="15" viewBox="0 0 20 15" fill="none" stroke="#fff" stroke-width="1.600"><path d="M1 5.500c5-5.500 13-5.500 18 0M3.700 8.500c3.500-4 9-4 12.600 0M6.500 11.200c2-2.300 5-2.300 7 0"/><circle cx="10" cy="13" r="1.200" fill="#fff"/></svg>
    <svg width="20" height="16" viewBox="0 0 20 16" fill="none" stroke="#fff" stroke-width="1.400"><path d="M1 5.500h3L9 1v14l-5-4.500H1zM11.500 5c1.500 2 1.500 4 0 6M14 3c3 3 3 7 0 10"/><path d="M16.500 1c4 4 4 10 0 14" stroke="#777"/></svg>
    <svg width="21" height="17" viewBox="0 0 21 17"><path d="M6 4h10c2 0 2 1 2 2v7c0 2-1 2-2 2H3c-2 0-2-1-2-2V9" fill="none" stroke="#fff" stroke-width="1.500"/><path d="M8 6h8v7H3v-3h3zM19 7h1.500v5H19zM5 0L0 7h3l-1 5 5-7H4z" fill="#fff"/></svg>
    <div class="clock">09:14 PM<br>22-10-2025</div>
  </div>
</div>
</body>
</html>
```
FILE: styles.css
```css
* { box-sizing: border-box; }
body { margin: 0; font-family: "Open Sans", "Noto Sans", sans-serif; font-size: 14px; color: #252423; background: #f3f2f1; }
svg { display: block; flex: none; }
.defs { position: absolute; }
.app { width: 1920px; height: 1080px; display: grid; grid-template-rows: 43px 38px 57px 852px 30px 60px; overflow: hidden; white-space: nowrap; }

/* title bar */
.titlebar { background: #3b3a39; color: #fff; display: grid; grid-template-columns: 37px 37px 30px 662px 865px 58px 66px 54px 55px auto; padding-left: 22px; align-items: center; }
.wintitle { font-size: 14.500px; letter-spacing: -.12px; padding-top: 5px; }
.topsearch { width: 500px; height: 30px; margin-top: -1px; background: #d4d4d2; border-radius: 2px; display: flex; align-items: center; gap: 14px; padding-left: 21px; color: #444; }
.topsearch span { color: #1c5b50; font-size: 17px; letter-spacing: -.2px; }
.signin { font-size: 14.500px; letter-spacing: 0; }

/* menu */
.menu { background: #fafafa; display: grid; grid-template-columns: 73px 87px 83px 113px 76px 109px auto; padding-left: 28px; font-size: 17px; letter-spacing: -.18px; }
.menu span { height: 38px; line-height: 40px; justify-self: start; }
.menu .on { font-weight: 600; border-bottom: 3px solid #117865; letter-spacing: -.4px; }

/* ribbon */
.ribbon { background: #fafafa; display: grid; grid-template-columns: 59px 41px 22px 139px 50px 60px 47px 49px 53px 50px 20px 60px 113px 19px 145px 52px 163px 21px 167px 42px 21px 143px 20px 112px 1fr; grid-auto-flow: column; padding: 0 8px 0 25px; position: relative; z-index: 2; box-shadow: 0 2px 6px rgba(0,0,0,.2); font-size: 17px; letter-spacing: -.27px; }
.cmd { display: flex; align-items: center; height: 64px; gap: 11px; }
.cmd .ch { margin-left: -4px; }
.cmd svg + .ch { margin-left: -7px; }
.cmd .wide { margin-left: 4px; letter-spacing: -.35px; }
.data-cmd { gap: 10px; }
.shift { padding-left: 1px; }
.off { color: #c4c4c4; }
.sep { width: 1px; height: 40px; margin-top: 12px; background: #d2d0ce; }
.collapse { justify-self: end; margin-top: 44px; }

/* work area */
.work { display: grid; grid-template-columns: 50px 1418px 226px 226px; }
.rail { background: #f3f2f1; }
.rail div { height: 50px; display: flex; align-items: center; justify-content: center; padding-bottom: 3px; }
.rail .on { border-left: 4px solid #117865; padding-right: 3px; }
.center { display: grid; grid-template-columns: 1377px 41px; grid-template-rows: 808px 44px; }
.stage { background: #fff; }
.report { position: relative; height: 776px; background: #d0d3ec; border-bottom: 2px dotted #605e5c; }
.heading { position: absolute; left: 345px; top: 36px; margin: 0; font-size: 28.500px; line-height: 40px; font-weight: 700; letter-spacing: -.87px; text-decoration: underline; text-decoration-thickness: 2px; text-decoration-skip-ink: none; text-underline-offset: 3px; }
.visual { position: absolute; }
.v1 { left: 0; top: 156px; width: 647px; height: 301px; }
.v2 { left: 0; top: 458px; width: 647px; height: 300px; }
.v3 { left: 647px; top: 192px; width: 450px; height: 290px; }
.v4 { left: 647px; top: 482px; width: 450px; height: 276px; }
.vizbtns { position: absolute; left: 547px; top: 126px; display: flex; gap: 5.500px; }
.vizbtns span { width: 29px; height: 28px; background: #fff; display: flex; align-items: center; justify-content: center; }
.slicer { position: absolute; left: 1071px; top: 72px; width: 281px; color: #666; }
.slhead { display: flex; justify-content: space-between; align-items: center; height: 28px; padding: 0 3px 2px 3px; }
.slhead b { font: 500 15px Roboto, sans-serif; letter-spacing: .15px; color: #252423; padding-top: 2px; }
.slbox { margin-top: 2px; height: 30px; border: 1px solid #e4e4ee; display: flex; justify-content: space-between; align-items: center; padding: 1px 6px 0 5px; font-size: 13px; color: #777; }
.vt { font: 400 17px Roboto, sans-serif; fill: #252423; stroke: #252423; stroke-width: .2px; }
.at { font: 500 14px Roboto, sans-serif; fill: #252423; }
.at.sm { font-size: 11px; }
.ax { font-size: 12px; fill: #605e5c; }
.tilt { font-size: 12.300px; }
.end { text-anchor: end; }
.mid { text-anchor: middle; }
.lg { font-size: 13px; fill: #605e5c; }
.lgt { font-weight: 700; }
.grid { fill: none; stroke: #c8c6c4; stroke-dasharray: 1.200 5.300; }
.bars { fill: #118dff; stroke: #71b2f6; stroke-width: .8px; }

.filters { background: #fff; border-left: 1px solid #b3b0ad; display: flex; flex-direction: column; align-items: center; padding-top: 15px; }
.filters .flip { transform: scaleX(-1); margin-left: 2px; }
.filters svg:nth-child(2) { margin: 19px 0 11px 7px; }
.filters b { writing-mode: vertical-rl; font-size: 17px; font-weight: 600; letter-spacing: .2px; margin-left: 2px; }
.tabs { grid-column: 1 / 3; background: #f3f2f1; display: grid; grid-template-columns: 62px 43px 28px 14px 170px auto; padding-left: 12px; align-items: center; }
.dev { width: 30px; height: 30px; border-bottom: 4px solid #117865; display: flex; justify-content: center; margin-top: 4px; }
.tabs > svg { margin-top: -5px; }
.tab { height: 44px; line-height: 43px; background: #fff; border-left: 1px solid #aaa; border-right: 1px solid #aaa; box-shadow: inset 0 -5px #117865; text-align: center; font-size: 14px; font-weight: 500; letter-spacing: 0; }
.plus { width: 49px; height: 40px; background: #117865; display: grid; place-items: center; }

/* panes */
.pane { background: #f3f2f1; border-left: 1px solid #e1dfdd; }
.phead { display: flex; justify-content: space-between; align-items: center; height: 50px; padding: 0 10px; }
.phead h2 { margin: 0; font-size: 18px; font-weight: 600; letter-spacing: -.05px; }
.phead h2 { letter-spacing: -.1px; }
.bv { height: 22px; line-height: 16px; padding-left: 10px; font-size: 14px; font-weight: 600; letter-spacing: -.2px; }
.modes { display: flex; gap: 43px; padding-left: 10px; }
.modes span { width: 40px; height: 40px; display: grid; place-items: center; }
.modes .on { background: #d2d0ce; border-radius: 3px; }
.notch { margin-top: 5px; }
.icons { display: grid; grid-template-columns: repeat(6, 35px); grid-auto-rows: 35px; padding: 6px 0 5px 8px; border-bottom: 1px solid #e1dfdd; place-items: center; }
.icons svg { width: 23px; height: 23px; overflow: visible; }
.wells { font-size: 14px; letter-spacing: .08px; padding-left: 5px; }
.lbl { padding: 11px 0 7px 10px; line-height: 20px; }
.well { width: 213px; background: #fff; border: 1px dashed #c8c6c4; }
.a { height: 35px; line-height: 33px; padding-left: 13px; }
.b { height: 32px; line-height: 31px; padding-left: 10px; margin-top: 6px; letter-spacing: .17px; }
.semi { color: #484644; font-weight: 600; letter-spacing: -.05px; padding-top: 13px; padding-bottom: 5px; }
.row { display: flex; justify-content: space-between; align-items: center; height: 34px; padding: 0 27px 0 10px; }
.toggle { width: 40px; height: 20px; border-radius: 10px; background: #117865; color: #fff; font-size: 11px; display: flex; align-items: center; padding-left: 6px; gap: 4px; }
.toggle i { width: 10px; height: 10px; border-radius: 50%; background: #fff; }
.dsearch { margin: 7px 5px 0; height: 32px; background: #fff; border: 1px solid #605e5c; border-radius: 2px; display: flex; align-items: center; gap: 7px; padding-left: 9px; font-size: 16.500px; color: #444; letter-spacing: -.2px; }
.table { display: flex; align-items: center; height: 52px; padding-left: 11px; font-size: 14px; letter-spacing: .05px; }
.table svg + svg { margin: 0 7px 0 8px; }

/* status bar */
.status { background: #f3f2f1; border-top: 1px solid #e1dfdd; border-bottom: 1px solid #111; display: grid; grid-template-columns: 1408px 174px 48px 38px auto; padding-left: 6px; align-items: center; font-size: 14.500px; letter-spacing: -.05px; color: #484644; }
.status span:nth-child(3) { font-size: 14px; }
.upd { letter-spacing: -.12px; }

/* taskbar */
.taskbar { background: linear-gradient(90deg, #2a231e, #33241b 25%, #2b2320 45%, #30241c 70%, #2a211e); color: #fff; display: grid; grid-template-columns: 589px 47px 289px 55px 54px 56px 53px 56px 46px 237px 37px 39px 40px 39px 57px 30px 30px 56px 62px; padding: 1px 0 0 24px; align-items: center; }
.weather { display: flex; align-items: center; gap: 2px; }
.weather div { display: flex; flex-direction: column; line-height: 20px; }
.weather b { font-weight: 400; font-size: 14.500px; letter-spacing: -.4px; }
.weather span { color: #c9c6c4; font-size: 14.500px; }
.tsearch { width: 273px; height: 38px; border-radius: 19px; background: #f2f1f0; color: #555; display: flex; align-items: center; padding: 0 5px 0 13px; font-size: 16.500px; gap: 12px; letter-spacing: -.1px; }
.tsearch svg:last-child { margin-left: auto; }
.run { height: 50px; position: relative; display: flex; align-items: center; }
.run i { position: absolute; left: 12px; bottom: 1px; width: 8px; height: 4px; border-radius: 2px; background: #9b9896; }
.active { width: 50px; justify-content: center; background: #3d3531; border: 1px solid #4a423e; border-radius: 5px; }
.active i { left: 14px; bottom: 0; width: 20px; background: #ff8534; }
.lang { text-align: center; line-height: 20px; font-size: 14.500px; letter-spacing: -.2px; padding-right: 19px; margin-left: -2px; }
.clock { text-align: right; line-height: 20px; font-size: 14.500px; letter-spacing: -.05px; justify-self: end; width: 80px; margin-right: 1px; }
```
